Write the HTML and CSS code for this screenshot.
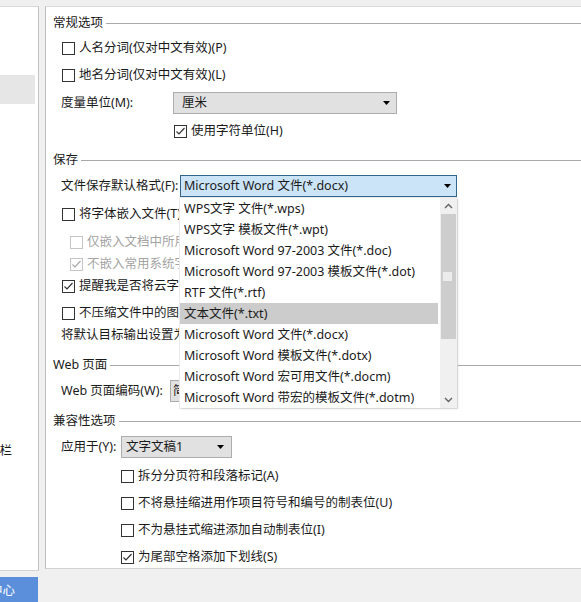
FILE: index.html
```html
<!DOCTYPE html>
<html lang="zh-CN">
<head>
<meta charset="utf-8">
<title>Word 选项</title>
<link rel="stylesheet" href="styles.css">
</head>
<body>
<div class="window">
  <nav class="side">
    <div class="side-box">
      <div class="nav-active"></div>
      <div class="nav-qat"><span>快速访问工具栏</span></div>
    </div>
    <div class="nav-trust"><div class="nav-trust-inner"><span>信任中心</span></div></div>
  </nav>

  <main class="panel">
    <div class="row sec"><span>常规选项</span></div>
    <div class="row ind m3"><span class="box"></span><span>人名分词(仅对中文有效)(P)</span></div>
    <div class="row ind m5"><span class="box"></span><span>地名分词(仅对中文有效)(L)</span></div>
    <div class="row ind m6">
      <span class="lab w112">度量单位(M):</span>
      <div class="select sel-unit"><span>厘米</span><svg class="arrow" width="7" height="4" viewBox="0 0 7 4"><polygon points="0,0 7,0 3.5,4" fill="#000"/></svg></div>
    </div>
    <div class="row ind-unit m6"><span class="box"><svg width="11" height="11" viewBox="0 0 11 11"><polyline points="1.5,5.5 4,8 9.5,2" fill="none" stroke="#333" stroke-width="1.2"/></svg></span><span>使用字符单位(H)</span></div>

    <div class="row sec m7"><span>保存</span></div>
    <div class="row ind m4">
      <span class="lab w119">文件保存默认格式(F):</span>
      <div class="combo">
        <div class="select sel-format"><span>Microsoft Word 文件(*.docx)</span><svg class="arrow" width="7" height="4" viewBox="0 0 7 4"><polygon points="0,0 7,0 3.5,4" fill="#000"/></svg></div>
        <div class="dropdown">
          <ul class="items">
            <li>WPS文字 文件(*.wps)</li>
            <li>WPS文字 模板文件(*.wpt)</li>
            <li>Microsoft Word 97-2003 文件(*.doc)</li>
            <li>Microsoft Word 97-2003 模板文件(*.dot)</li>
            <li>RTF 文件(*.rtf)</li>
            <li class="hl">文本文件(*.txt)</li>
            <li>Microsoft Word 文件(*.docx)</li>
            <li>Microsoft Word 模板文件(*.dotx)</li>
            <li>Microsoft Word 宏可用文件(*.docm)</li>
            <li>Microsoft Word 带宏的模板文件(*.dotm)</li>
          </ul>
          <div class="scrollbar">
            <div class="sb-btn"><svg width="9" height="6" viewBox="0 0 9 6"><polyline points="1,5 4.5,1.5 8,5" fill="none" stroke="#606060" stroke-width="1.3"/></svg></div>
            <div class="sb-thumb"><span class="sb-grip"></span></div>
            <div class="sb-track"></div>
            <div class="sb-btn"><svg width="9" height="6" viewBox="0 0 9 6"><polyline points="1,1 4.5,4.5 8,1" fill="none" stroke="#606060" stroke-width="1.3"/></svg></div>
          </div>
        </div>
      </div>
    </div>
    <div class="row ind m6"><span class="box"></span><span>将字体嵌入文件(T)</span></div>
    <div class="row ind-sub m6 disabled"><span class="box"></span><span>仅嵌入文档中所用的字符(适于减小文件大小)(C)</span></div>
    <div class="row ind-sub disabled"><span class="box"><svg width="11" height="11" viewBox="0 0 11 11"><polyline points="1.5,5.5 4,8 9.5,2" fill="none" stroke="#a8a8a8" stroke-width="1.2"/></svg></span><span>不嵌入常用系统字体(N)</span></div>
    <div class="row ind"><span class="box"><svg width="11" height="11" viewBox="0 0 11 11"><polyline points="1.5,5.5 4,8 9.5,2" fill="none" stroke="#333" stroke-width="1.2"/></svg></span><span>提醒我是否将云字体嵌入文件(R)</span></div>
    <div class="row ind m5"><span class="box"></span><span>不压缩文件中的图像(M)</span></div>
    <div class="row ind"><span>将默认目标输出设置为(T):</span></div>

    <div class="row sec m8"><span>Web 页面</span></div>
    <div class="row ind m4">
      <span class="lab w109">Web 页面编码(W):</span>
      <div class="select sel-web"><span>简体中文(GB2312)</span><svg class="arrow" width="7" height="4" viewBox="0 0 7 4"><polygon points="0,0 7,0 3.5,4" fill="#000"/></svg></div>
    </div>

    <div class="row sec m8"><span>兼容性选项</span></div>
    <div class="row ind m4">
      <span class="lab w60">应用于(Y):</span>
      <div class="select sel-apply"><span>文字文稿1</span><svg class="arrow" width="7" height="4" viewBox="0 0 7 4"><polygon points="0,0 7,0 3.5,4" fill="#000"/></svg></div>
    </div>
    <div class="row ind-compat m7"><span class="box"></span><span>拆分分页符和段落标记(A)</span></div>
    <div class="row ind-compat m5"><span class="box"></span><span>不将悬挂缩进用作项目符号和编号的制表位(U)</span></div>
    <div class="row ind-compat m5"><span class="box"></span><span>不为悬挂式缩进添加自动制表位(I)</span></div>
    <div class="row ind-compat m5"><span class="box"><svg width="11" height="11" viewBox="0 0 11 11"><polyline points="1.5,5.5 4,8 9.5,2" fill="none" stroke="#333" stroke-width="1.2"/></svg></span><span>为尾部空格添加下划线(S)</span></div>
  </main>
</div>
</body>
</html>
```

FILE: styles.css
```css
* { box-sizing: border-box; }
html, body { margin: 0; padding: 0; }
body {
  background: #f0f0f0;
  font-family: "Noto Sans", "Noto Sans CJK SC", sans-serif;
  font-size: 12.5px;
  line-height: 16px;
  color: #1b1b1b;
  width: 581px;
  height: 602px;
  overflow: hidden;
}
.window {
  display: flex;
  gap: 6px;
  padding-top: 6px;
  height: 602px;
}

/* sidebar */
.side {
  width: 39px;
  flex: none;
  display: flex;
  flex-direction: column;
  gap: 6px;
}
.side-box {
  height: 565px;
  background: #fff;
  border-top: 1px solid #dadada;
  border-right: 1px solid #c4c4c4;
  border-bottom: 1px solid #d4d4d4;
  overflow: hidden;
}
.nav-active {
  margin-top: 68px;
  width: 35px;
  height: 29px;
  background: #e6e6e6;
}
.nav-qat {
  margin-top: 339px;
  width: 12px;
  height: 16px;
  display: flex;
  justify-content: flex-end;
  white-space: nowrap;
}
.nav-trust {
  height: 25px;
  width: 38px;
  background: #5b8fdc;
  color: #fff;
  display: flex;
  align-items: center;
  overflow: hidden;
}
.nav-trust-inner {
  width: 15px;
  display: flex;
  justify-content: flex-end;
  white-space: nowrap;
  padding-top: 3px;
}

/* main panel */
.panel {
  flex: 1;
  min-width: 0;
  height: 563px;
  background: #fff;
  border-top: 1px solid #dadada;
  border-left: 1px solid #bdbdbd;
  border-bottom: 1px solid #d2d2d2;
  padding: 5px 0 0 7px;
  overflow: hidden;
}
.row {
  display: flex;
  align-items: center;
  height: 22px;
  white-space: nowrap;
}
.sec::after {
  content: "";
  flex: 1;
  height: 1px;
  background: #a9a9a9;
  margin-left: 3px;
}
.ind { padding-left: 8px; }
.ind-sub { padding-left: 16px; }
.ind-unit { padding-left: 120px; }
.ind-compat { padding-left: 67px; }

.m3 { margin-top: 3px; }
.m4 { margin-top: 4px; }
.m5 { margin-top: 5px; }
.m6 { margin-top: 6px; }
.m7 { margin-top: 7px; }
.m8 { margin-top: 8px; }

.box {
  width: 13px;
  height: 13px;
  flex: none;
  border: 1px solid #333;
  background: #fff;
  margin-left: 1px;
  margin-right: 4px;
  display: flex;
  align-items: center;
  justify-content: center;
}
.box svg { display: block; }
.disabled { color: #a3a3a3; }
.disabled .box { border-color: #c4c4c4; }

.lab { flex: none; overflow: hidden; }
.w112 { width: 112px; }
.w119 { width: 119px; }
.w109 { width: 109px; }
.w60 { width: 60px; }

.select {
  height: 22px;
  flex: none;
  border: 1px solid #adadad;
  background: #e1e1e1;
  display: flex;
  align-items: center;
  justify-content: space-between;
  padding: 0 6px 0 4px;
}
.arrow { display: block; flex: none; }
.sel-unit { width: 224px; padding-left: 8px; }
.sel-format {
  width: 277px;
  padding-left: 3px;
  padding-right: 5px;
  background: #cce4f7;
  border-color: #33658b;
}
.sel-web { width: 230px; padding-left: 2px; }
.sel-apply { width: 111px; padding-right: 7px; }

/* dropdown list */
.combo { position: relative; }
.dropdown {
  position: absolute;
  left: 0;
  top: 23px;
  width: 277px;
  height: 210px;
  background: #fff;
  display: flex;
  box-shadow: 1px 1px 2px rgba(0, 0, 0, 0.12), 0 0 0 1px #ececec;
  z-index: 2;
}
.items {
  list-style: none;
  margin: 0;
  padding: 0;
  width: 260px;
}
.items li {
  height: 21px;
  line-height: 21px;
  padding-left: 4px;
  margin-right: 2px;
  color: #1b1b1b;
}
.items li.hl { background: #cccccc; }
.scrollbar {
  width: 17px;
  background: #f0f0f0;
  display: flex;
  flex-direction: column;
}
.sb-btn {
  height: 16px;
  display: flex;
  align-items: center;
  justify-content: center;
}
.sb-btn svg { display: block; }
.sb-thumb {
  height: 125px;
  margin: 0 1px;
  background: #cdcdcd;
  display: flex;
  align-items: center;
  justify-content: center;
}
.sb-grip {
  width: 9px;
  height: 9px;
  margin-left: -2px;
  background: #ececec;
}
.sb-track { flex: 1; }
```
